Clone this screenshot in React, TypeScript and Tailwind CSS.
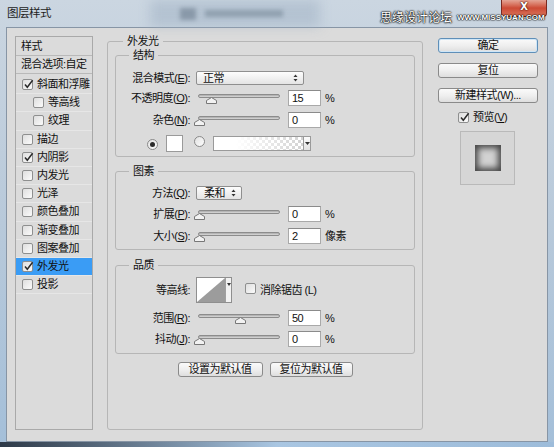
import React from "react";

const cjk = "font-['Liberation_Sans','Noto_Sans_CJK_SC',sans-serif]";

function Check({ checked = false }: { checked?: boolean }) {
  return (
    <span className="relative inline-block w-[11px] h-[11px] shrink-0 border border-[#8e8f8f] rounded-[2px] bg-linear-to-br from-[#dedede] to-[#fbfbfb]">
      {checked && (
        <svg className="absolute left-[0px] top-[-1px]" width="11" height="11" viewBox="0 0 11 11">
          <path d="M2 5.5 L4.3 8.3 L9.6 1.2" stroke="#2b2b2b" strokeWidth="1.5" fill="none" />
        </svg>
      )}
    </span>
  );
}

function Radio({ on = false }: { on?: boolean }) {
  return (
    <span className="relative inline-flex w-[11px] h-[11px] shrink-0 rounded-full border border-[#8a8a8a] bg-linear-to-br from-[#e2e2e2] to-[#fdfdfd] items-center justify-center">
      {on && <span className="w-[5px] h-[5px] rounded-full bg-[#2c2c2c]" />}
    </span>
  );
}

function Arrows() {
  return (
    <svg width="5" height="8" viewBox="0 0 5 8">
      <path d="M2.5 0.5 L4.5 3 L0.5 3 Z" fill="#333" />
      <path d="M2.5 7.5 L4.5 5 L0.5 5 Z" fill="#333" />
    </svg>
  );
}

function Slider({ value }: { value: number }) {
  return (
    <div className="relative w-[82px] h-[16px] shrink-0">
      <div className="absolute left-0 right-0 top-[4px] h-[4px] rounded-[2px] border border-[#8c8c8c] bg-linear-to-b from-[#a8a8a8] to-[#dcdcdc]" />
      <svg className="absolute top-[7px]" style={{ left: 1 + value * 0.82 - 5 }} width="11" height="7" viewBox="0 0 11 7">
        <path d="M5.5 0.5 L10.5 3.5 L10.5 6.5 L0.5 6.5 L0.5 3.5 Z" fill="#f2f2f2" stroke="#777" />
      </svg>
    </div>
  );
}

function Num({ v }: { v: string }) {
  return (
    <div className="w-[33px] h-[16px] shrink-0 border border-[#a9a9a9] border-t-[#8b8b8b] bg-white flex items-center pl-[3px] text-[11px] leading-none">
      {v}
    </div>
  );
}

function Label({ children, w = "w-[74px]" }: { children: React.ReactNode; w?: string }) {
  return <div className={"text-right shrink-0 leading-none " + w}>{children}</div>;
}

function Legend({ children }: { children: React.ReactNode }) {
  return <legend className="ml-[13px] px-[4px] leading-[14px]">{children}</legend>;
}

function Btn({ children, def = false, w }: { children: React.ReactNode; def?: boolean; w: string }) {
  return (
    <div
      className={
        "h-[15px] flex items-center justify-center rounded-[3px] border bg-linear-to-b from-[#fafafa] via-[#efefef] to-[#dedede] leading-none " +
        (def ? "border-[#5f8fb8] shadow-[inset_0_0_0_1px_#cfe6f7] " : "border-[#8a8a8a] ") +
        w
      }
    >
      {children}
    </div>
  );
}

const items: { t: string; c?: boolean; ind?: boolean; sel?: boolean }[] = [
  { t: "斜面和浮雕", c: true },
  { t: "等高线", ind: true },
  { t: "纹理", ind: true },
  { t: "描边" },
  { t: "内阴影", c: true },
  { t: "内发光" },
  { t: "光泽" },
  { t: "颜色叠加" },
  { t: "渐变叠加" },
  { t: "图案叠加" },
  { t: "外发光", c: true, sel: true },
  { t: "投影" },
];

export default function App() {
  return (
    <div
      className={
        "relative w-[554px] h-[447px] overflow-hidden bg-linear-to-b from-[#cbd6e1] via-[#b8c9da] to-[#a4bfd9] text-[11px] tracking-[-0.5px] text-[#111] " +
        cjk
      }
    >
      {/* title bar */}
      <div className="relative h-[27px] flex items-center pl-[7px]">
        <div className="absolute left-[150px] top-0 w-[170px] h-[27px] bg-[#9fb1c3]/50 blur-[6px]" />
        <div className="absolute left-[180px] top-[8px] w-[16px] h-[12px] bg-[#6c7d8e]/60 blur-[2px]" />
        <div className="absolute left-[205px] top-[10px] w-[78px] h-[7px] bg-[#6c7d8e]/50 blur-[2px]" />
        <span className="relative text-[11.5px] text-[#1d1d1d]">图层样式</span>
        <div className="absolute left-[501px] top-0 w-[46px] h-[17px] rounded-b-[4px] border border-t-0 border-[#7a2a20] bg-linear-to-b from-[#e3a495] via-[#cc4a35] to-[#d9735a] flex items-start justify-center pt-[2px]">
          <span className="font-['DejaVu_Sans',sans-serif] font-bold text-[10px] leading-[10px] text-white [text-shadow:0_0_2px_#3a0a05,0_0_1px_#3a0a05] tracking-normal">X</span>
        </div>
        <div className="absolute left-[380px] top-[10px] flex items-end tracking-normal">
          <span className="text-[12px] leading-[13px] text-white font-['Noto_Sans_CJK_SC',sans-serif] [text-shadow:0_0_1px_#000,0_0_2px_#000,0_0_2px_#000]">思缘设计论坛</span>
          <span className="ml-[5px] mb-[1px] text-[8px] leading-[8px] font-bold text-white font-['Liberation_Sans',sans-serif] [text-shadow:0_0_1px_#000,0_0_1px_#000,0_0_2px_#000]">WWW.MISSYUAN.COM</span>
        </div>
      </div>

      {/* content */}
      <div className="ml-[6px] w-[542px] h-[415px] border border-[#8795a5] bg-[#dbdbdb] flex items-start pt-[8px] pl-[8px]">
        {/* left list */}
        <div className="w-[78px] h-[394px] shrink-0 border border-[#a9a9a9] flex flex-col">
          <div className="h-[19px] border-b border-[#b9b9b9] flex items-center pl-[5px] leading-none">样式</div>
          <div className="h-[18px] border-b border-[#b9b9b9] flex items-center pl-[5px] leading-none">混合选项:自定</div>
          <div className="mt-[2px] flex flex-col">
            {items.map((it) => (
              <div
                key={it.t}
                className={
                  "h-[18.2px] flex items-center border-b border-[#e6e6e6] leading-none " +
                  (it.sel ? "bg-[#3a9cf5] " : "") +
                  (it.ind ? "pl-[17px]" : "pl-[6px]")
                }
              >
                <Check checked={it.c} />
                <span className="ml-[4px]">{it.t}</span>
              </div>
            ))}
          </div>
        </div>

        {/* middle */}
        <fieldset className="ml-[14px] mt-[-2px] w-[316px] h-[396px] shrink-0 border border-[#b6b6b6] rounded-[3px] px-[7px]">
          <legend className="ml-[8px] px-[4px] leading-[14px]">外发光</legend>

          {/* 结构 */}
          <fieldset className="border border-[#b6b6b6] rounded-[3px] pb-[5px]">
            <Legend>结构</Legend>
            <div className="mt-[9px] h-[14px] flex items-center">
              <Label>
                混合模式(<u>E</u>):
              </Label>
              <div className="ml-[6px] w-[108px] h-[14px] flex items-center justify-between border border-[#8f8f8f] rounded-[2px] bg-linear-to-b from-[#fdfdfd] to-[#e4e4e4] pl-[6px] pr-[5px] leading-none">
                <span>正常</span>
                <Arrows />
              </div>
            </div>
            <div className="mt-[5px] h-[16px] flex items-center">
              <Label>
                不透明度(<u>O</u>):
              </Label>
              <div className="ml-[8px]">
                <Slider value={15} />
              </div>
              <div className="ml-[8px]">
                <Num v="15" />
              </div>
              <span className="ml-[4px] leading-none">%</span>
            </div>
            <div className="mt-[6px] h-[16px] flex items-center">
              <Label>
                杂色(<u>N</u>):
              </Label>
              <div className="ml-[8px]">
                <Slider value={0} />
              </div>
              <div className="ml-[8px]">
                <Num v="0" />
              </div>
              <span className="ml-[4px] leading-none">%</span>
            </div>
            <div className="mt-[7px] h-[16px] flex items-center">
              <div className="ml-[31px]">
                <Radio on />
              </div>
              <div className="ml-[8px] w-[17px] h-[17px] border border-[#9a9a9a] bg-white" />
              <div className="ml-[11px]">
                <Radio />
              </div>
              <div className="ml-[8px] w-[90px] h-[15px] border border-[#9a9a9a] border-r-0 bg-[linear-gradient(to_right,#ffffff_25%,rgba(255,255,255,0)),repeating-conic-gradient(#d2d2d2_0%_25%,#ffffff_0%_50%)] bg-[length:100%_100%,6px_6px]" />
              <div className="w-[8px] h-[15px] border border-[#9a9a9a] bg-linear-to-b from-[#fbfbfb] to-[#e2e2e2] flex items-center justify-center">
                <svg width="5" height="3" viewBox="0 0 5 3">
                  <path d="M0 0 L5 0 L2.5 3 Z" fill="#333" />
                </svg>
              </div>
            </div>
          </fieldset>

          {/* 图素 */}
          <fieldset className="mt-[7px] border border-[#b6b6b6] rounded-[3px] pb-[5px]">
            <Legend>图素</Legend>
            <div className="mt-[8px] h-[14px] flex items-center">
              <Label>
                方法(<u>Q</u>):
              </Label>
              <div className="ml-[6px] w-[46px] h-[14px] flex items-center justify-between border border-[#8f8f8f] rounded-[2px] bg-linear-to-b from-[#fdfdfd] to-[#e4e4e4] pl-[7px] pr-[5px] leading-none">
                <span>柔和</span>
                <Arrows />
              </div>
            </div>
            <div className="mt-[6px] h-[16px] flex items-center">
              <Label>
                扩展(<u>P</u>):
              </Label>
              <div className="ml-[8px]">
                <Slider value={0} />
              </div>
              <div className="ml-[8px]">
                <Num v="0" />
              </div>
              <span className="ml-[4px] leading-none">%</span>
            </div>
            <div className="mt-[6px] h-[16px] flex items-center">
              <Label>
                大小(<u>S</u>):
              </Label>
              <div className="ml-[8px]">
                <Slider value={0} />
              </div>
              <div className="ml-[8px]">
                <Num v="2" />
              </div>
              <span className="ml-[4px] leading-none">像素</span>
            </div>
          </fieldset>

          {/* 品质 */}
          <fieldset className="mt-[8px] border border-[#b6b6b6] rounded-[3px] pb-[6px]">
            <Legend>品质</Legend>
            <div className="mt-[5px] h-[26px] flex items-center">
              <Label>等高线:</Label>
              <div className="ml-[6px] flex h-[26px] border border-[#8f8f8f]">
                <svg width="28" height="24" viewBox="0 0 28 24" className="bg-white">
                  <path d="M0 24 L28 0 L28 24 Z" fill="#9c9c9c" />
                </svg>
                <div className="w-[6px] h-full border-l border-[#a0a0a0] bg-[#f2f2f2] flex items-start justify-center pt-[5px]">
                  <svg width="4" height="3" viewBox="0 0 4 3">
                    <path d="M0 0 L4 0 L2 3 Z" fill="#333" />
                  </svg>
                </div>
              </div>
              <div className="ml-[13px]">
                <Check />
              </div>
              <span className="ml-[4px] leading-none">消除锯齿 (L)</span>
            </div>
            <div className="mt-[7px] h-[16px] flex items-center">
              <Label>
                范围(<u>R</u>):
              </Label>
              <div className="ml-[8px]">
                <Slider value={50} />
              </div>
              <div className="ml-[8px]">
                <Num v="50" />
              </div>
              <span className="ml-[4px] leading-none">%</span>
            </div>
            <div className="mt-[5px] h-[16px] flex items-center">
              <Label>
                抖动(<u>J</u>):
              </Label>
              <div className="ml-[8px]">
                <Slider value={0} />
              </div>
              <div className="ml-[8px]">
                <Num v="0" />
              </div>
              <span className="ml-[4px] leading-none">%</span>
            </div>
          </fieldset>

          <div className="mt-[8px] flex justify-center gap-[7px]">
            <Btn w="w-[85px]">设置为默认值</Btn>
            <Btn w="w-[83px]">复位为默认值</Btn>
          </div>
        </fieldset>

        {/* right */}
        <div className="ml-[15px] mt-[2px] w-[100px] shrink-0 flex flex-col">
          <Btn def w="w-[100px]">确定</Btn>
          <div className="mt-[10px]">
            <Btn w="w-[100px]">复位</Btn>
          </div>
          <div className="mt-[10px]">
            <Btn w="w-[100px]">新建样式(W)...</Btn>
          </div>
          <div className="mt-[9px] h-[11px] flex items-center pl-[20px]">
            <Check checked />
            <span className="ml-[4px] leading-none">
              预览(<u>V</u>)
            </span>
          </div>
          <div className="mt-[8px] ml-[22px] w-[55px] h-[54px] border border-[#b9b9b9] bg-[#d6d6d6] flex items-center justify-center">
            <div className="w-[26px] h-[26px] bg-[#d2d2d2] shadow-[inset_0_0_6px_3px_#454545]" />
          </div>
        </div>
      </div>

      {/* bottom frame strip */}
      <div className="h-[5px] bg-linear-to-r from-[#2e3a48] via-[#a9c6e2] to-[#9dbcda]" />
    </div>
  );
}
